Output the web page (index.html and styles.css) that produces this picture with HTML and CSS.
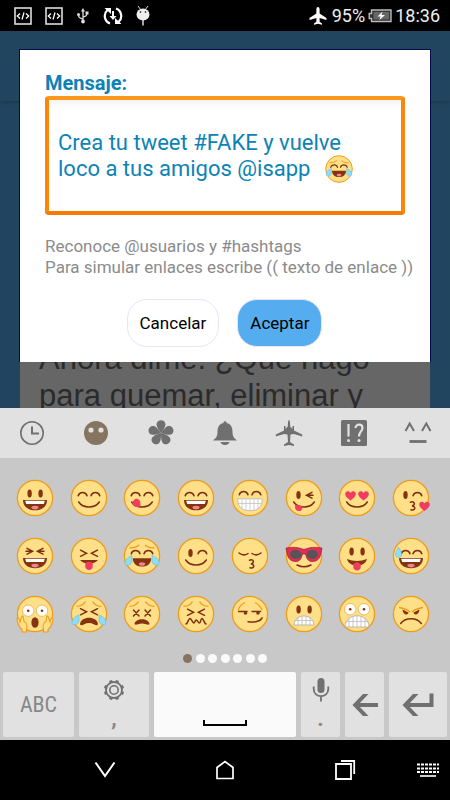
FILE: index.html
```html
<!DOCTYPE html>
<html lang="es">
<head>
<meta charset="utf-8">
<meta name="viewport" content="width=device-width, initial-scale=1">
<title>Mensaje</title>
<link rel="stylesheet" href="styles.css">
</head>
<body>
<svg class="sprite" aria-hidden="true">
  <defs>
    <circle id="face" r="17.6" fill="#ffdf87" stroke="#ee9c1c" stroke-width="1.3"/>
    <g id="eyes" fill="#86340f"><ellipse cx="-5.4" cy="-4.4" rx="2.2" ry="4"/><ellipse cx="5.6" cy="-4.4" rx="2.2" ry="4"/></g>
    <ellipse id="eye-l" cx="-5.5" cy="-3" rx="2.2" ry="4" fill="#86340f"/>
    <path id="arc-l" class="ln" d="M-10.8-2.2C-9.5-6.5-3.3-6.5-2-2.2"/>
    <path id="arc-r" class="ln" d="M2-2.2C3.3-6.5 9.5-6.5 10.8-2.2"/>
    <path id="smile" class="ln" d="M-10.3 4C-6 10.5 6 10.5 10.3 4"/>
    <g id="open"><path d="M-12 2H12C12 8.5 7 12.3 0 12.3S-12 8.5-12 2Z" fill="#86340f"/><path d="M-9.8 2.8H9.8L8.8 6H-8.8Z" fill="#fff"/><ellipse cy="9.6" rx="3.6" ry="1.8" fill="#ee8592"/></g>
    <path id="sq-l" class="ln" d="M-8-7.6L-2.4-4.7L-8-1.8M-9-4.7H-2.4"/>
    <path id="sq-r" class="ln" d="M8-7.6L2.4-4.7L8-1.8M9-4.7H2.4"/>
    <path id="gtlt" class="ln" d="M-8.5-5.8L-2.5-2.7L-8.5.3M8.5-5.8L2.5-2.7L8.5.3"/>
    <path id="brows" d="M-12.5-7.6Q-6-8-3.5-12.5M12.5-7.6Q6-8 3.5-12.5" fill="none" stroke="#ee9c1c" stroke-width="1.3"/>
    <g id="tears" fill="#8edcf6" stroke="#58b9dc" stroke-width=".5"><path d="M-10-.5C-15 1-17.8 5-16.8 8.2C-15 10.6-10.3 9-10 5.5Z"/><path d="M10-.5C15 1 17.8 5 16.8 8.2C15 10.6 10.3 9 10 5.5Z"/></g>
    <path id="heart" d="M0 5C-3 2.5-5.3.8-5.3-1.6C-5.3-5-1.2-5.2 0-2.4C1.2-5.2 5.3-5 5.3-1.6C5.3.8 3 2.5 0 5Z" fill="#ef3c60"/>
    <path id="kiss" class="ln" d="M-.5 4.2C3.5 2.8 5 6.8 1 8C5.5 8.4 4 13 0 11.8"/>
    <g id="wide"><circle cx="-6.8" cy="-4.8" r="5.7" fill="#fff" stroke="#ee9c1c" stroke-width=".6"/><circle cx="7" cy="-4.8" r="5.7" fill="#fff" stroke="#ee9c1c" stroke-width=".6"/><circle cx="-6.8" cy="-4.8" r="1.3" fill="#86340f"/><circle cx="7" cy="-4.8" r="1.3" fill="#86340f"/></g>
    <g id="joy"><use href="#face"/><use href="#arc-l"/><use href="#arc-r"/><path d="M-12.5-8.2Q-6-8-3-11M12.5-8.2Q6-8 3-11" fill="none" stroke="#ee9c1c" stroke-width="1.3"/><path d="M-9.3 2.2H9.3C9 7.5 5.5 10.6 0 10.6S-9 7.5-9.3 2.2Z" fill="#86340f"/><ellipse cy="8" rx="3.2" ry="1.8" fill="#ee8592"/><use href="#tears"/></g>
  </defs>
</svg>

<header class="status">
  <div class="status-group notices">
    <svg width="18" height="18" viewBox="0 0 18 18"><rect x="1" y="1" width="16" height="16" fill="none" stroke="#ddd" stroke-width="1.6"/><path d="M6 6.500L3.300 9L6 11.500M12 6.500L14.700 9L12 11.500M10 5.500L8 12.500" fill="none" stroke="#fff" stroke-width="1.300"/></svg>
    <svg width="18" height="18" viewBox="0 0 18 18"><rect x="1" y="1" width="16" height="16" fill="none" stroke="#ddd" stroke-width="1.6"/><path d="M6 6.500L3.300 9L6 11.500M12 6.500L14.700 9L12 11.500M10 5.500L8 12.500" fill="none" stroke="#fff" stroke-width="1.300"/></svg>
    <svg width="14" height="18" viewBox="0 0 14 18"><path d="M7 3V14M7 12C3 11 2.500 10 2.500 7.500M7 10C10.500 9.500 11 8.500 11 6" fill="none" stroke="#ddd" stroke-width="1.300"/><path d="M7 1L9 4.500H5Z" fill="#ddd"/><circle cx="2.500" cy="7.500" r="1.500" fill="#ddd"/><path d="M9.500 4.500H12.500V7.500H9.500Z" fill="#ddd"/><circle cx="7" cy="14.500" r="1.900" fill="#ddd"/></svg>
    <svg width="20" height="20" viewBox="0 0 20 20"><path d="M7 17.500A8 8 0 0 1 4.500 4M13 2.500A8 8 0 0 1 15.500 16" fill="none" stroke="#fff" stroke-width="2.200"/><path d="M1.500 2H8V8ZM18.500 18H12V12Z" fill="#fff"/><path d="M10 5V12" stroke="#fff" stroke-width="2"/><path d="M6.500 10H13.500L10 14Z" fill="#fff"/></svg>
    <svg width="14" height="20" viewBox="0 0 14 20"><path d="M2 0L5 4M12 0L9 4" stroke="#ddd"/><ellipse cx="7" cy="8.500" rx="6.500" ry="6" fill="#eee"/><circle cx="4.500" cy="6" r=".8"/><circle cx="9.500" cy="6" r=".8"/><path d="M7 14V19.500" stroke="#ddd" stroke-width="1.500"/></svg>
  </div>
  <div class="status-group">
    <svg class="plane" width="18" height="18" viewBox="0 0 18 18"><path d="M9 0C7.900 0 7.400 1 7.400 2.500V6.500L.5 11V13L7.400 11V14.700L5 16.500V17.800L9 16.800L13 17.800V16.500L10.600 14.700V11L17.500 13V11L10.600 6.500V2.500C10.600 1 10.100 0 9 0Z" fill="#fff"/></svg>
    <span>95%</span>
    <svg width="24" height="14" viewBox="0 0 24 14"><path d="M3.500 1H23V12.500H3.500V9.500H1.200V4.500H3.500Z" fill="#333" stroke="#bbb" stroke-width="1.400"/><path d="M5.500 3H21V10.500H5.500Z" fill="#666"/><path d="M14.500 2.500L9.500 7.500H12.500L11.500 11L17 6H13.500Z" fill="#fff"/></svg>
    <span class="clock">18:36</span>
  </div>
</header>

<main class="stage">
  <div class="page">
    <div class="page-bar"></div>
    <p class="post">Ahora dime: ¿Qué hago para quemar, eliminar y</p>
  </div>
  <form class="dialog">
    <label class="title" for="message">Mensaje:</label>
    <div class="field">
      <textarea id="message" rows="2" spellcheck="false">Crea tu tweet #FAKE y vuelve
loco a tus amigos @isapp</textarea>
      <svg class="inline-emoji" viewBox="-18.500 -18.500 37 37"><use href="#joy"/></svg>
    </div>
    <p class="hint">Reconoce @usuarios y #hashtags<br>Para simular enlaces escribe (( texto de enlace ))</p>
    <div class="actions">
      <button type="button" class="btn">Cancelar</button>
      <button type="button" class="btn primary">Aceptar</button>
    </div>
  </form>
</main>

<section class="keyboard" aria-label="Teclado">
  <div class="tabs">
    <button aria-label="Recientes"><svg viewBox="0 0 28 28"><circle cx="14" cy="14" r="11.200" fill="none" stroke="#707070" stroke-width="1.600"/><path d="M14 7.500V14.500H21" fill="none" stroke="#707070" stroke-width="2"/></svg></button>
    <button aria-label="Caras"><svg viewBox="0 0 28 28"><circle cx="14" cy="14" r="12" fill="#857560"/><circle cx="9" cy="11" r="2.600" fill="#e1e1e1"/><circle cx="19" cy="11" r="2.600" fill="#e1e1e1"/></svg></button>
    <button aria-label="Naturaleza"><svg viewBox="0 0 28 28"><g fill="#707070"><path id="petal" d="M14 14C11 10 9.600 7.500 9.600 5.200C9.600 -.2 18.400 -.2 18.400 5.200C18.400 7.500 17 10 14 14Z"/><use href="#petal" transform="rotate(72 14 14)"/><use href="#petal" transform="rotate(144 14 14)"/><use href="#petal" transform="rotate(216 14 14)"/><use href="#petal" transform="rotate(288 14 14)"/></g></svg></button>
    <button aria-label="Objetos"><svg viewBox="0 0 28 28"><path d="M12.500 4V3Q14 1.500 15.500 3V4C20.500 5 21.500 9 21.500 13C21.500 17.500 23 19 26 21.500H2C5 19 6.500 17.500 6.500 13C6.500 9 7.500 5 12.500 4ZM9.500 23H18.500Q17.500 26 14 26T9.500 23Z" fill="#707070"/></svg></button>
    <button aria-label="Viajes"><svg viewBox="0 0 28 28"><path d="M14 .8C13.200 1.500 12.800 4 12.800 7.500L10.500 10V7H9V11.500L.8 15.500V17.500L9 15L12.500 15.500L13 23L9 25.500V27L14 26L19 27V25.500L15 23L15.500 15.500L19 15L27.200 17.500V15.500L19 11.500V7H17.500V10L15.200 7.500C15.200 4 14.800 1.500 14 .8Z" fill="#707070"/></svg></button>
    <button aria-label="Símbolos"><svg viewBox="0 0 28 28"><rect x="1" y="1" width="26" height="26" rx="1.500" fill="#707070"/><path d="M8.500 5V17.500M15.500 9C15.500 4.500 22.500 4.500 22.500 9C22.500 12.500 19 12.500 19 17.500" fill="none" stroke="#e1e1e1" stroke-width="2.200"/><circle cx="8.500" cy="21.500" r="1.500" fill="#e1e1e1"/><circle cx="19" cy="21.500" r="1.500" fill="#e1e1e1"/></svg></button>
    <button aria-label="Emoticonos"><svg viewBox="0 0 28 28"><path d="M1.500 12L5.700 4.500L10 12M18 12L22.300 4.500L26.500 12" fill="none" stroke="#707070" stroke-width="2"/><path d="M5.500 22.500H22.500" stroke="#707070" stroke-width="2.800"/></svg></button>
  </div>

  <div class="emojis">
    <button aria-label="Sonriente"><svg viewBox="-19 -19 38 38"><use href="#face"/><use href="#eyes"/><use href="#open"/></svg></button>
    <button aria-label="Contento"><svg viewBox="-19 -19 38 38"><use href="#face"/><use href="#arc-l"/><use href="#arc-r"/><use href="#smile"/></svg></button>
    <button aria-label="Delicioso"><svg viewBox="-19 -19 38 38"><use href="#face"/><use href="#arc-l"/><use href="#arc-r"/><use href="#smile"/><path d="M-9.500 5C-9 0-3-1-2 3.500C-1 7-1.500 9-4 9C-7 9-10 7.500-9.500 5Z" fill="#ef3c60"/></svg></button>
    <button aria-label="Risa"><svg viewBox="-19 -19 38 38"><use href="#face"/><use href="#arc-l"/><use href="#arc-r"/><use href="#open"/></svg></button>
    <button aria-label="Dientes"><svg viewBox="-19 -19 38 38"><use href="#face"/><use href="#arc-l" y="-1"/><use href="#arc-r" y="-1"/><path d="M-12.200 .8H12.200C12.500 8.500 8 12.700 0 12.700S-12.500 8.500-12.200 .8Z" fill="#fff" stroke="#aaa" stroke-width=".7"/><path d="M-12 5.500H12M-8 1V11M-4 1V12.500M0 1V12.500M4 1V12.500M8 1V11" stroke="#bbb" stroke-width=".7"/></svg></button>
    <button aria-label="Guiño con lengua"><svg viewBox="-19 -19 38 38"><use href="#face"/><use href="#eye-l"/><use href="#sq-r" y="2"/><use href="#smile"/><path d="M-8.500 6.500L-1.500 8.500C-1.500 12-3 13.500-5.500 13C-9 12.500-9.500 9.500-8.500 6.500Z" fill="#ef3c60"/></svg></button>
    <button aria-label="Enamorado"><svg viewBox="-19 -19 38 38"><use href="#face"/><use href="#heart" x="-6.500" y="-2.500"/><use href="#heart" x="6.500" y="-2.500"/><use href="#smile"/></svg></button>
    <button aria-label="Beso con corazón"><svg viewBox="-19 -19 38 38"><use href="#face"/><use href="#eye-l"/><use href="#arc-r"/><use href="#kiss"/><use href="#heart" x="13.500" y="8"/></svg></button>

    <button aria-label="Carcajada"><svg viewBox="-19 -19 38 38"><use href="#face"/><use href="#sq-l"/><use href="#sq-r"/><use href="#open"/></svg></button>
    <button aria-label="Burla"><svg viewBox="-19 -19 38 38"><use href="#face"/><use href="#gtlt"/><path d="M-9 4H9Q6 7.500 0 7.500T-9 4Z" fill="#86340f"/><path d="M-3.700 7Q0 4.500 3.700 7V10.500C3.700 15-3.700 15-3.700 10.500Z" fill="#ef3c60"/></svg></button>
    <button aria-label="Lágrimas de risa"><svg viewBox="-19 -19 38 38"><use href="#joy"/></svg></button>
    <button aria-label="Guiño"><svg viewBox="-19 -19 38 38"><use href="#face"/><use href="#eye-l"/><use href="#arc-r"/><use href="#smile"/></svg></button>
    <button aria-label="Beso"><svg viewBox="-19 -19 38 38"><use href="#face"/><path class="ln" d="M-11-3Q-6.500.5-2-2.500M11-3Q6.500.5 2-2.500"/><use href="#kiss"/></svg></button>
    <button aria-label="Gafas de sol"><svg viewBox="-19 -19 38 38"><use href="#face"/><path d="M-18-8C-11-9-6-9 0-6.500C6-9 11-9 18-8L17-3C16 3 13 5.500 8 5.500C4 5.500 2.500 2 1.500-2H-1.500C-2.500 2-4 5.500-8 5.500C-13 5.500-16 3-17-3Z" fill="#e42c58" stroke="#8e1838" stroke-width=".7"/><ellipse cx="-8.300" cy="-1.500" rx="5.700" ry="4.500" fill="#555"/><ellipse cx="8.300" cy="-1.500" rx="5.700" ry="4.500" fill="#555"/><path class="ln" d="M-7 9Q0 12.500 7 9"/></svg></button>
    <button aria-label="Lengua"><svg viewBox="-19 -19 38 38"><use href="#face"/><use href="#eyes"/><path d="M-10 3Q0 7 10 3C8 12-8 12-10 3Z" fill="#86340f"/><path d="M-3.700 8L0 6L3.700 8V11C3.700 15.500-3.700 15.500-3.700 11Z" fill="#ef3c60"/></svg></button>
    <button aria-label="Sudor"><svg viewBox="-19 -19 38 38"><use href="#face"/><use href="#arc-l" x="1"/><use href="#arc-r"/><use href="#open"/><path d="M-12.500-9C-14-5-16-3.500-15.500-.5C-14.500 2-10 2-9.300-.5C-9-4-11-6-12.500-9Z" fill="#8edcf6" stroke="#58b9dc" stroke-width=".5"/></svg></button>

    <button aria-label="Grito"><svg viewBox="-19 -19 38 38"><use href="#face"/><use href="#wide" y="1.500"/><ellipse cy="8.500" rx="3.600" ry="5.300" fill="#86340f"/><path id="hand" d="M-18 4.500Q-16.500 3-15.500 6L-15 8L-13.500 3.500Q-12-.0-11.500 4L-11 7.500C-8.500 8.500-7.500 12-8.500 15.500V18H-13V15.500C-16 13.500-18 8-18 4.500Z" fill="#ffdf87" stroke="#ee9c1c" stroke-width="1.100"/><use href="#hand" transform="scale(-1 1)"/></svg></button>
    <button aria-label="Llanto"><svg viewBox="-19 -19 38 38"><use href="#face"/><use href="#brows"/><use href="#gtlt" y=".5"/><path d="M-9 10C-8 1.500 8 1.500 9 10C8 13.500 5 9 0 9S-8 13.500-9 10Z" fill="#86340f"/><use href="#tears" y="1.500"/></svg></button>
    <button aria-label="Mareado"><svg viewBox="-19 -19 38 38"><use href="#face"/><use href="#brows"/><path class="ln" d="M-8.500-4L-3 2M-3-4L-8.500 2M3-4L8.500 2M8.500-4L3 2"/><path d="M-7.500 10C-7 3.500 7 3.500 7.500 10C6.500 12 4 9.500 0 9.500S-6.500 12-7.500 10Z" fill="#86340f"/></svg></button>
    <button aria-label="Confundido"><svg viewBox="-19 -19 38 38"><use href="#face"/><use href="#brows"/><use href="#gtlt" y="1"/><path class="ln" d="M-10 10C-8 9-7.500 4.500-6 4.500S-3.500 9-2.300 9S-.8 6 .3 6S2.200 9 3.500 9S4.500 4.500 6 4.500S8 9 10 10"/></svg></button>
    <button aria-label="Pícaro"><svg viewBox="-19 -19 38 38"><use href="#face"/><path d="M-12-4Q-10-9-5-11.500M12-4Q10-9 5-11.500" fill="none" stroke="#ee9c1c" stroke-width="1.300"/><path class="ln" d="M-11.500-2.500H-3M2-2.500H10.500M-2 7.800Q9 9 12 4"/><circle cx="-4.500" cy="-1" r="1.800" fill="#86340f"/><circle cx="8" cy="-1" r="1.800" fill="#86340f"/></svg></button>
    <button aria-label="Mueca"><svg viewBox="-19 -19 38 38"><use href="#face"/><use href="#eyes"/><path d="M-10 11C-9.500-1 9.500-1 10 11Z" fill="#fff" stroke="#aaa" stroke-width=".8"/><path d="M-9.500 6.500H9.500M-6 3.500V11M-2 2V11M2 2V11M6 3.500V11" stroke="#bbb" stroke-width=".8"/></svg></button>
    <button aria-label="Pánico"><svg viewBox="-19 -19 38 38"><use href="#face"/><use href="#wide"/><path d="M-12 13C-11.500-2 11.500-2 12 13Z" fill="#fff" stroke="#aaa" stroke-width=".8"/><path d="M-11.500 7.500H11.500M-8 4V13M-4 2.500V13M0 2V13M4 2.500V13M8 4V13" stroke="#bbb" stroke-width=".8"/></svg></button>
    <button aria-label="Enfado"><svg viewBox="-19 -19 38 38"><use href="#face"/><path d="M-12-6.500Q-5-5.500-1-2M12-6.500Q5-5.500 1-2" fill="none" stroke="#ee9c1c" stroke-width="1.500"/><path d="M-8.500-4.500L-2.500-1.500C-3.500 2-8 1-8.500-4.500ZM8.500-4.500L2.500-1.500C3.500 2 8 1 8.500-4.500Z" fill="#86340f"/><path class="ln" d="M-10.300 9.500C-6 3 6 3 10.300 9.500"/></svg></button>
  </div>

  <div class="dots"><i class="on"></i><i></i><i></i><i></i><i></i><i></i><i></i></div>

  <div class="keys">
    <button class="key abc">ABC</button>
    <button class="key double" aria-label="Ajustes y coma">
      <svg width="22" height="22" viewBox="-11 -11 22 22"><g stroke="#707070" stroke-width="3.200"><path d="M-3.500-9.500L3.500 9.500M3.500-9.500L-3.500 9.500M-9.500-3.500L9.500 3.500M-9.500 3.500L9.500-3.500"/></g><circle r="8" fill="#e1e1e1" stroke="#707070" stroke-width="1.800"/><circle r="4.200" fill="none" stroke="#707070" stroke-width="1.600"/></svg>
      <span>,</span>
    </button>
    <button class="key space" aria-label="Espacio"><svg width="44" height="8" viewBox="0 0 44 8"><path d="M1 1V6H43V1" fill="none" stroke="#000" stroke-width="2"/></svg></button>
    <button class="key double" aria-label="Micrófono y punto">
      <svg width="18" height="24" viewBox="0 0 18 24"><rect x="5.500" width="7" height="15" rx="3.500" fill="#707070"/><path d="M1.700 8.500V11C1.700 20.500 16.300 20.500 16.300 11V8.500M9 18V23.500" fill="none" stroke="#707070" stroke-width="1.800"/></svg>
      <span>.</span>
    </button>
    <button class="key" aria-label="Borrar"><svg width="26" height="24" viewBox="0 0 26 24"><path d="M26 12H4" stroke="#707070" stroke-width="4"/><path d="M11 1H16.500L6 12L16.500 23H11L.5 12Z" fill="#707070"/></svg></button>
    <button class="key" aria-label="Intro"><svg width="34" height="24" viewBox="0 0 34 24"><path d="M30.500 .5V12H4" fill="none" stroke="#707070" stroke-width="4"/><path d="M12 1H17.500L7 12L17.500 23H12L1.500 12Z" fill="#707070"/></svg></button>
  </div>
</section>

<nav class="navbar">
  <button class="nav-back" aria-label="Ocultar"><svg width="22" height="18" viewBox="0 0 22 18"><path d="M1.500 1.500L11 15L20.500 1.500" fill="none" stroke="#fff" stroke-width="2"/></svg></button>
  <button aria-label="Inicio"><svg width="20" height="20" viewBox="0 0 20 20"><path d="M2 7.500L10 1.500L18 7.500V18.500H2Z" fill="none" stroke="#fff" stroke-width="1.700"/></svg></button>
  <button aria-label="Recientes"><svg width="22" height="22" viewBox="0 0 22 22"><path d="M2 5H17V20H2ZM7 2H20.200V15" fill="none" stroke="#fff" stroke-width="1.800"/></svg></button>
  <button aria-label="Teclado"><svg width="22" height="14" viewBox="0 0 22 14"><path d="M0 1.500H22M0 5.500H22M0 9H22" stroke="#fff" stroke-width="2" stroke-dasharray="3 1"/><path d="M3 13H19" stroke="#fff" stroke-width="1.600"/></svg></button>
</nav>
</body>
</html>
```
FILE: styles.css
```css
* { box-sizing: border-box; }

body {
  margin: 0;
  min-height: 100vh;
  display: flex;
  flex-direction: column;
  background: #000;
  font-family: Roboto, "Liberation Sans", sans-serif;
}

button {
  margin: 0;
  padding: 0;
  border: 0;
  background: none;
  font-family: inherit;
}

svg { display: block; }

.sprite { position: absolute; width: 0; height: 0; }

.ln {
  fill: none;
  stroke: #7d300f;
  stroke-width: 1.5px;
  stroke-linecap: round;
}

/* Status bar */
.status {
  height: 31px;
  display: flex;
  align-items: center;
  justify-content: space-between;
  padding: 0 10px 0 14px;
  background: #000;
  color: #eee;
  font-size: 18px;
}

.status-group {
  display: flex;
  align-items: center;
  gap: 3px;
}

.notices { gap: 13px; }
.plane { margin-right: 2px; }

/* App screen with the dialog over it */
.stage {
  flex: 1;
  display: grid;
  background: #22455f;
  overflow: hidden;
}

.page, .dialog { grid-area: 1 / 1; }

.page {
  height: 0;
  min-height: 100%;
  padding: 0 20px;
  overflow: hidden;
}

.page-bar {
  height: 70px;
  margin: 0 -20px;
  box-shadow: 0 1px 4px #17354c;
}

.post {
  margin: 0;
  padding: 239px 30px 30px 19px;
  background: #666;
  color: #2b2b2b;
  font: 31px/37px "Liberation Sans", Arial, sans-serif;
}

.dialog {
  z-index: 1;
  align-self: start;
  margin: 18px 19px 0;
  padding: 21px 0 15px 25px;
  border: 1px solid #020c48;
  border-bottom-width: 0;
  background: #fff;
}

.title {
  display: block;
  color: #0c83b5;
  font-size: 20px;
  font-weight: 700;
  line-height: 25px;
}

.field {
  position: relative;
  margin-right: 25px;
}

.field textarea {
  display: block;
  width: 100%;
  height: 119px;
  padding: 30px 9px 0;
  border: 4px solid;
  border-color: #fb981c #fb860c #f77a05;
  border-radius: 4px;
  outline: 0;
  resize: none;
  overflow: hidden;
  background: linear-gradient(#f5f5f5, #fff 10px);
  color: #0c83b5;
  font: 22px/26px Roboto, "Liberation Sans", sans-serif;
}

.inline-emoji {
  position: absolute;
  left: 280px;
  top: 59px;
  width: 28px;
  height: 28px;
}

.hint {
  margin: 21px 0;
  color: #8b8b8b;
  font-size: 17px;
  line-height: 21px;
  white-space: nowrap;
}

.actions {
  display: flex;
  justify-content: center;
  align-items: center;
  gap: 18px;
  margin-right: 26px;
}

.btn {
  height: 48px;
  padding: 0 12px;
  border: 1px solid #e6e4fb;
  border-radius: 20px;
  background: #fff;
  color: #000;
  font-size: 17px;
}

.btn.primary { background: #55acee; }

/* Keyboard */
.keyboard { background: #c8c8c8; }

.tabs {
  display: grid;
  grid-template-columns: repeat(7, 1fr);
  height: 50px;
  background: #e1e1e1;
}

.tabs button {
  display: grid;
  place-items: center;
}

.tabs svg { width: 28px; height: 28px; }

.emojis {
  display: grid;
  grid-template-columns: repeat(8, 1fr);
  grid-auto-rows: 58px;
  padding: 11px 12px 0 8px;
}

.emojis button {
  display: grid;
  place-items: center;
}

.emojis svg { width: 38px; height: 38px; overflow: visible; }

.dots {
  display: flex;
  justify-content: space-between;
  width: 84px;
  margin: 0 auto;
  padding: 11px 0 9px;
}

.dots i {
  width: 9px;
  height: 9px;
  border-radius: 50%;
  background: #fafafa;
}

.dots .on { background: #857560; }

.keys {
  display: grid;
  grid-template-columns: 71fr 70fr 142fr 39fr 39fr 58fr;
  gap: 5px;
  padding: 0 3px 3px;
}

.key {
  display: grid;
  place-items: center;
  height: 65px;
  border-radius: 2px;
  background: #e1e1e1;
  color: #888;
}

.abc { font: 22px "Roboto Condensed", Roboto, sans-serif; }

.double {
  grid-template-rows: 36px 29px;
  font-size: 22px;
  font-weight: 700;
}

.double span { line-height: 22px; align-self: start; }

.space {
  align-items: end;
  padding-bottom: 10px;
  background: #fafafa;
}

/* System navigation */
.navbar {
  display: grid;
  grid-template-columns: 45px repeat(3, 1fr) 45px;
  height: 60px;
  background: #000;
}

.navbar button {
  display: grid;
  place-items: center;
}

.nav-back { grid-column: 2; }
```
